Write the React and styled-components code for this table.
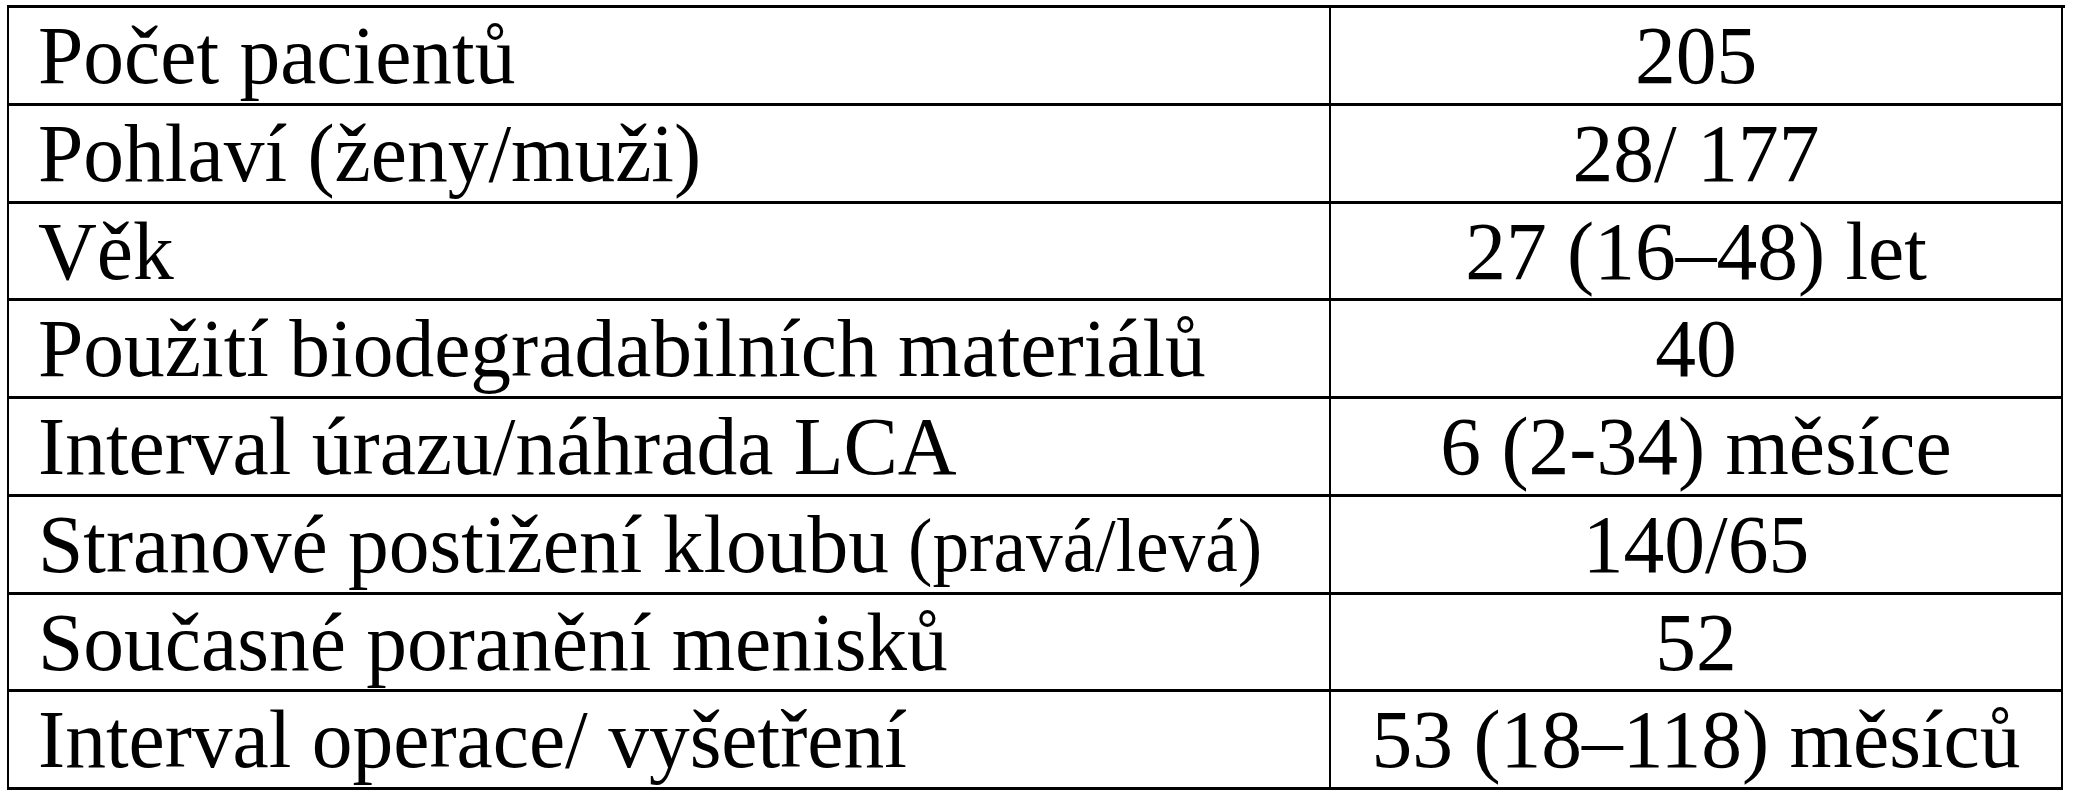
import React from 'react';
import styled, { createGlobalStyle } from 'styled-components';

const GlobalStyle = createGlobalStyle`
  html, body {
    margin: 0;
    padding: 0;
    background: #fff;
  }
`;

const Page = styled.div`
  padding: 5px 0 0 7px;
`;

const Table = styled.div`
  display: grid;
  grid-template-columns: 1322px 732px;
  grid-auto-rows: 97.75px;
  width: 2056px;
  border-top: 3px solid #000;
  border-left: 2px solid #000;
  font-family: "Liberation Serif", "Times New Roman", serif;
  font-size: 81.5px;
  color: #000;
`;

const Cell = styled.div`
  display: flex;
  align-items: center;
  justify-content: ${props => props.center ? 'center' : 'flex-start'};
  padding-left: ${props => props.center ? '0' : '29px'};
  padding-top: 1px;
  border-right: 2px solid #000;
  border-bottom: 3px solid #000;
  line-height: 1;
  white-space: nowrap;
`;

const Note = styled.span`
  display: inline-block;
  margin-left: 0.25em;
  font-size: 76px;
  transform: scaleX(0.965);
  transform-origin: left center;
`;

const rows = [
  { label: 'Počet pacientů', value: '205' },
  { label: 'Pohlaví (ženy/muži)', value: '28/ 177' },
  { label: 'Věk', value: '27 (16–48) let' },
  { label: 'Použití biodegradabilních materiálů', value: '40' },
  { label: 'Interval úrazu/náhrada LCA', value: '6 (2-34) měsíce' },
  { label: 'Stranové postižení kloubu', note: '(pravá/levá)', value: '140/65' },
  { label: 'Současné poranění menisků', value: '52' },
  { label: 'Interval operace/ vyšetření', value: '53 (18–118) měsíců' },
];

const App = () => {
  return (
    <Page>
      <GlobalStyle />
      <Table>
        {rows.map((row, index) => (
          <React.Fragment key={index}>
            <Cell>
              {row.label}
              {row.note && <Note>{row.note}</Note>}
            </Cell>
            <Cell center>{row.value}</Cell>
          </React.Fragment>
        ))}
      </Table>
    </Page>
  );
};

export default App;
